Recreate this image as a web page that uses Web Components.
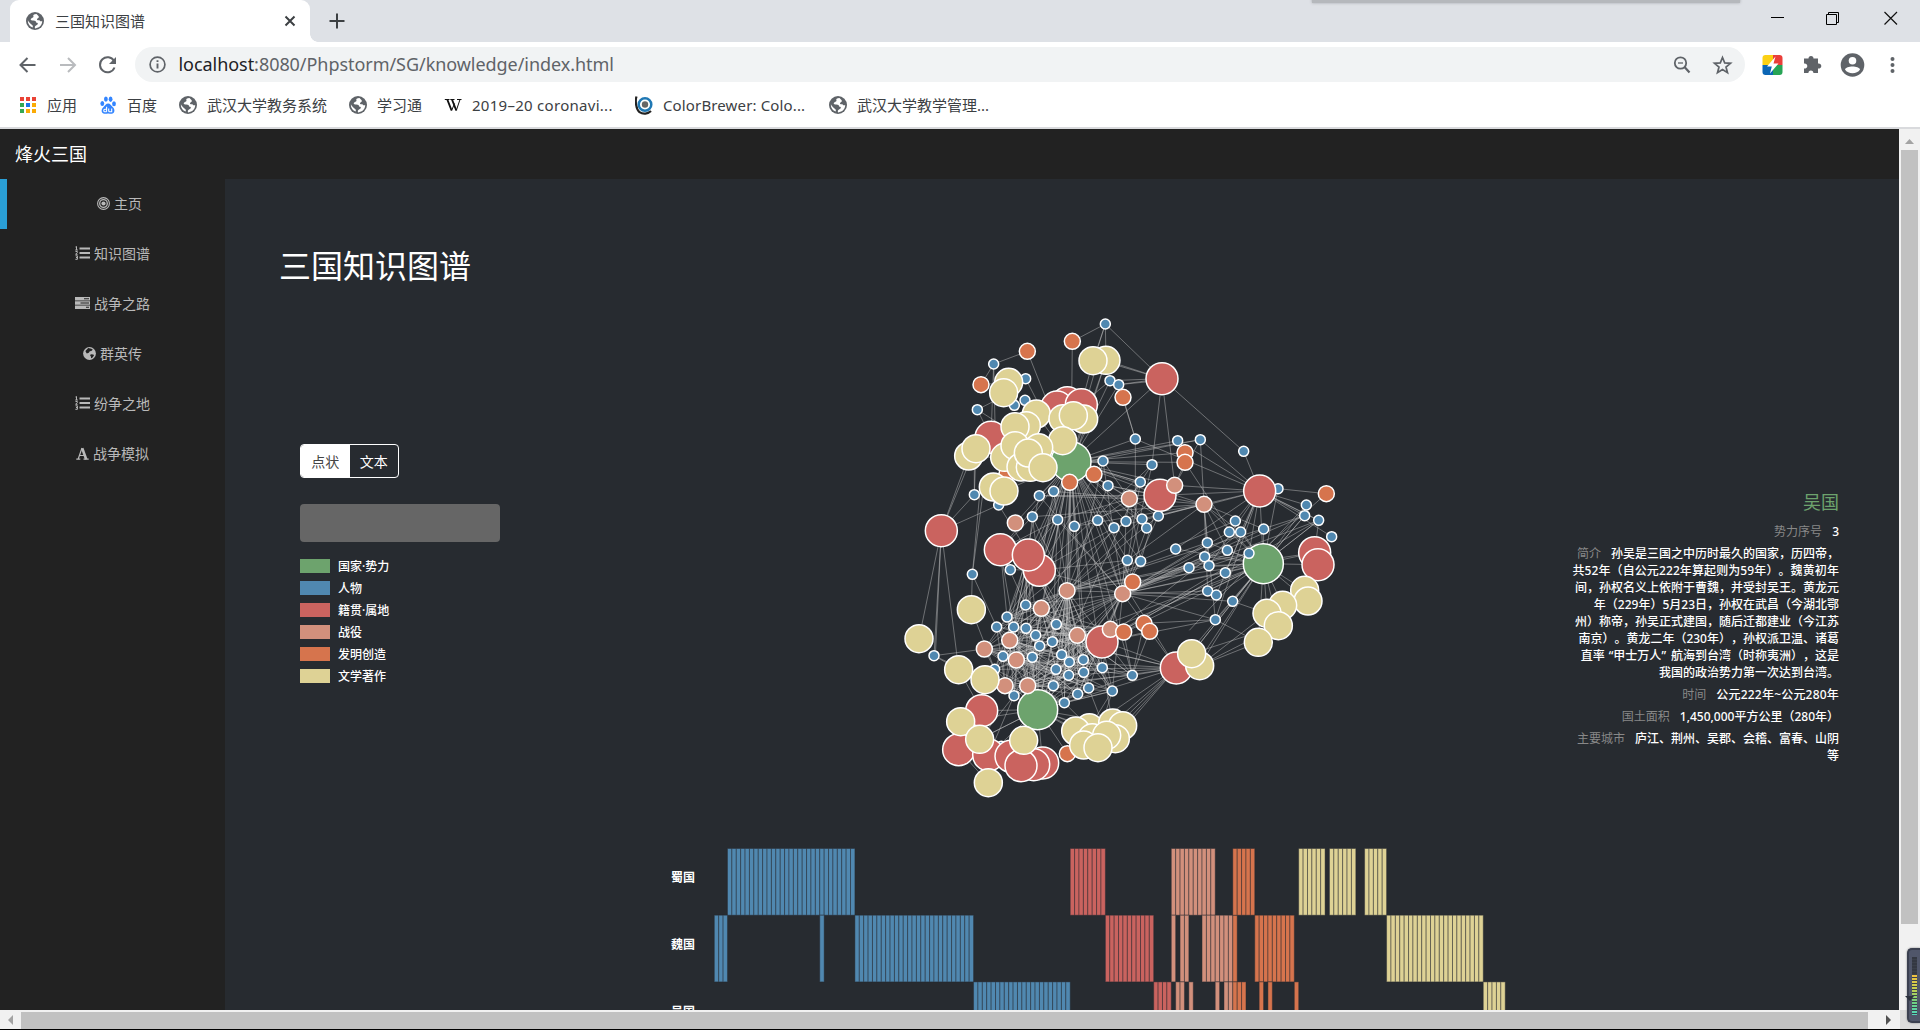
<!DOCTYPE html>
<html lang="zh-CN">
<head>
<meta charset="utf-8">
<title>三国知识图谱</title>
<style>
html,body{margin:0;height:100%;overflow:hidden;background:#272b30}
body{font-family:"Noto Sans","Noto Sans CJK SC",sans-serif;text-spacing-trim:space-all}
</style>
</head>
<body>
<app-window></app-window>
<script>
const ICONS = {
  globe: '<svg width="18" height="18" viewBox="0 0 18 18"><circle cx="9" cy="9" r="9" fill="#5f6368"/><path d="M10.5 1.9C7.8 2.2 6.8 3 7.4 4.2 8.1 5.4 6.2 5.4 5 6.8c-.8 1 .2 1.8 1.6 1.7 2.4-.2 3.6.5 3.4 2 1.6.1 2.3.8 1.5 2-.8 1-2.3.9-2.6 2.3-.2 1 .1 1.5.3 1.6 4.2-.3 7-3.2 7-7.3-1.2.6-2.2.1-2.5-.7-.9-.2-1.9.2-2.5-.5-.8-.9.5-1.6 1.3-2.2.7-.6.3-1.3-.3-2zM1.9 8.300c-.3 3.600 1.900 6.300 4.800 7.200.6-1.700-.3-2.300-1.200-3-1.100-.9-2.600-2-3.600-4.200z" fill="#fff"/></svg>',
  apps: '<svg width="18" height="18" viewBox="0 0 18 18"><g fill="#ea4335"><path d="M1 1h4v4H1zM7 1h4v4H7zM13 1h4v4h-4z"/></g><path d="M1 7h4v4H1zM1 13h4v4H1z" fill="#34a853"/><path d="M7 7h4v4H7z" fill="#1a73e8"/><path d="M13 7h4v4h-4zM7 13h4v4H7zM13 13h4v4h-4z" fill="#fbab05"/></svg>',
  baidu: '<svg width="18" height="18" viewBox="0 0 18 18" fill="#3385ff"><ellipse cx="3.300" cy="7.500" rx="1.900" ry="2.500"/><ellipse cx="6.900" cy="3.100" rx="1.900" ry="2.700"/><ellipse cx="11.600" cy="3.300" rx="1.900" ry="2.700"/><ellipse cx="15" cy="7.700" rx="1.900" ry="2.500"/><path d="M9.200 7.500c2 0 2.800 1.900 4.500 3.500 2.900 2.700 1.900 6.700-1 6.800-1.300 0-2.300-.3-3.600-.3s-2.200.4-3.600.3c-3.100-.2-3.900-4-1.200-6.600C6 9.600 7 7.500 9.200 7.500z"/><path d="M7.600 10.800v5M7.600 13.300H5.800a1 1 0 0 0-1 1v.5a1 1 0 0 0 1 1h1.800M9.700 12.600v2.200a1 1 0 0 0 1 1h2v-3.200" fill="none" stroke="#fff" stroke-width="1.100"/></svg>',
  wiki: '<svg width="18" height="18" viewBox="0 0 18 18" fill="none" stroke="#111"><path d="M3.300 3.500l4.300 11M8 3.500l4.300 11" stroke-width="1.900"/><path d="M7.600 14.500l3-7M12.300 14.500L16 3.500M.8 3.500H5.500M6.300 3.500h4.200M13 3.500h4.500" stroke-width="1"/></svg>',
  brewer: '<svg width="18" height="20" viewBox="1 0 18 20" fill="none"><path d="M2.500 1.500C1 6 2 14 5.500 17.200c3.500 2.300 8.300 1.900 11.500-1.200" stroke="#222" stroke-width="2.200"/><circle cx="11" cy="9.500" r="6.300" fill="#fff" stroke="#1f78b4" stroke-width="2.500"/><circle cx="11" cy="9.500" r="3.200" fill="#666"/></svg>',
  target: '<svg width="13" height="13" viewBox="0 0 13 13" fill="none" stroke="#b9b9b9"><circle cx="6.500" cy="6.500" r="5.900" stroke-width="1.100"/><circle cx="6.500" cy="6.500" r="3.800" stroke-width="1.300"/><circle cx="6.500" cy="6.500" r="2.100" fill="#b9b9b9" stroke="none"/></svg>',
  list: '<svg width="15" height="14" viewBox="0 0 15 14" fill="none" stroke="#b9b9b9"><path d="M4.500 2.500H15M4.500 7H15M4.500 11.500H15" stroke-width="2.100"/><path d="M.5 1l1-.5v3.500M.3 4h2.500M.5 5.500h1.800v1L.6 8.300h2M.5 9.800h1.900v3.500H.4M1 11.500h1.200" stroke-width="1"/></svg>',
  server: '<svg width="15" height="12" viewBox="0 0 15 12"><path d="M0 0h15v3.400H0zM0 4.300h15v3.400H0zM0 8.600h15V12H0z" fill="#b9b9b9"/><path d="M9 1.700h5M5.500 6h8.500M11 10.300h3" stroke="#222" stroke-width="1.100"/></svg>',
  earth: '<svg width="13" height="13" viewBox="0 0 13 13"><circle cx="6.500" cy="6.500" r="6.400" fill="#b9b9b9"/><path d="M5.200 1l3.200.7 1.400 1-1.500 1.400-1.500.2-1 1.400-2 .8-.8-1.300-.6-1.300zM7.800 7.200l2.600.4.6 1-1.700 2.200-1.200.500-.2-1.900-.8-.9z" fill="#222"/></svg>',
  letter: '<svg width="13" height="13" viewBox="0 0 13 13" fill="none" stroke="#b9b9b9"><path d="M6.200 1.200l4 11" stroke-width="2.600"/><path d="M6 1L2.200 12M3.500 8.500h5M.3 12.200h4M7.500 12.200h5.200" stroke-width="1.200"/></svg>'
};
const define = (name, html, after) => {
  const tpl = document.createElement('template');
  tpl.innerHTML = html;
  customElements.define(name, class extends HTMLElement {
    constructor() {
      super();
      this.attachShadow({mode: 'open'}).append(tpl.content.cloneNode(true));
    }
    connectedCallback() { if (after) after(this, this.shadowRoot); }
  });
};
const setIcon = (icon, name) => { icon.shadowRoot.querySelector('span').innerHTML = ICONS[name] || ''; };

define('ui-icon', '<style>:host{display:inline-flex;flex:none}svg{display:block}</style><span></span>',
  h => { if (h.hasAttribute('name')) setIcon(h, h.getAttribute('name')); });

define('tab-strip', `<style>
:host{display:flex;height:42px;background:#dee1e6;position:relative;box-sizing:border-box;padding-left:10px;overflow:hidden}
.tab{width:300px;height:42px;background:#fff;border-radius:9px 9px 0 0;display:flex;align-items:center;box-sizing:border-box;padding:0 14px 0 16px;font-size:15px;color:#3c4043}
.tab b{font-weight:400;margin-left:11px;flex:1;position:relative;top:-1px}
.plus{align-self:center;margin-left:11px}
.win{margin-left:auto;display:flex;align-items:center;height:36px;padding-right:22px}
.shade{position:absolute;left:1312px;top:-3px;width:428px;height:6px;background:#b5b8bc;box-shadow:0 0 3px #a5a8ac}
.foot{align-self:flex-end;width:8px;height:8px;background:radial-gradient(circle at 100% 0,transparent 7.500px,#fff 8px)}
</style>
<div class="tab"><ui-icon name="globe"></ui-icon><b>三国知识图谱</b><svg width="12" height="12"><path d="M1.500 1.500l9 9M10.500 1.500l-9 9" stroke="#3c4043" stroke-width="2"/></svg></div><div class="foot"></div>
<svg class="plus" width="16" height="16"><path d="M8 .5v15M.5 8h15" stroke="#3c4043" stroke-width="2"/></svg>
<div class="win"><svg width="130" height="18"><path d="M3 8.500h13" stroke="#000"/><path d="M58.500 5.500h10v10h-10zM60.500 5.500v-2h10v10h-2" fill="none" stroke="#000"/><path d="M116.500 3l12.500 12.500M129 3l-12.500 12.500" stroke="#111" stroke-width="1.200"/></svg></div>
<div class="shade"></div>`);

define('tool-bar', `<style>
:host{display:flex;align-items:center;height:45px;background:#fff;padding-left:17px;box-sizing:border-box}
.nav{width:118px;flex:none}
.url{flex:none;width:1610px;height:35px;border-radius:18px;background:#f1f3f4;display:flex;align-items:center;box-sizing:border-box;padding:0 12px 0 14px}
.url p{margin:0 0 0 12.500px;flex:1;font-size:18px;color:#5f6368;white-space:nowrap;letter-spacing:-.05px;position:relative;top:-1px}
.url i{font-style:normal;color:#202124}
svg{display:block}
</style>
<svg class="nav" width="118" height="24" fill="none" stroke="#5f6368" stroke-width="2"><path d="M18.500 12H4M10.500 5l-7 7 7 7"/><path d="M43 12h14.500M51 5l7 7-7 7" stroke="#b9bbbe"/><path d="M97 8a7.500 7.500 0 1 0 .5 6.500"/><path d="M99 4v7h-7z" fill="#5f6368" stroke="none"/></svg>
<div class="url"><svg width="17" height="17" fill="none" stroke="#5f6368"><circle cx="8.500" cy="8.500" r="7.400" stroke-width="1.700"/><path d="M8.500 7.500v5M8.500 4.300v1.800" stroke-width="1.900"/></svg>
<p><i>localhost</i>:8080/Phpstorm/SG/knowledge/index.html</p>
<svg width="60" height="20" fill="none" stroke="#5f6368"><circle cx="7.500" cy="8" r="5.700" stroke-width="1.800"/><path d="M11.500 12l5 5.500" stroke-width="2.200"/><path d="M5 8h5" stroke-width="1.300"/><path d="M49.500 2.500l2.200 5.400 5.800.4-4.500 3.700 1.500 5.700-5-3.200-5 3.200 1.500-5.700-4.500-3.700 5.800-.4z" stroke-width="1.700"/></svg></div>
<svg width="175" height="26" style="flex:none"><defs><clipPath id="c"><rect x="17.500" y="3" width="20" height="20" rx="3"/></clipPath></defs><g clip-path="url(#c)"><path d="M17 2h11v11H17z" fill="#fbd014"/><path d="M28 2h11v11H28z" fill="#ea3e3a"/><path d="M17 13h11v11H17z" fill="#0b66b5"/><path d="M28 13h11v11H28z" fill="#27a455"/><path d="M30.500 4.500L22 14.500h4.800L25 21.500l8.500-10h-5z" fill="#fff"/></g>
<path d="M59 7.500h4.500a2.500 2.500 0 1 1 5 0H73v5a2.600 2.600 0 1 1 0 5V22h-4.600a2.500 2.500 0 0 0-5 0H59v-4.500a2.600 2.600 0 1 0 0-5z" fill="#5f6368" transform="translate(0 -1)"/>
<circle cx="107.500" cy="13" r="11.800" fill="#5f6368"/><circle cx="107.500" cy="8.800" r="3.800" fill="#fff"/><path d="M100 17.500c1-4 14-4 15 0-3 5-12 5-15 0z" fill="#fff"/>
<g fill="#5f6368"><circle cx="147.500" cy="7" r="2"/><circle cx="147.500" cy="13" r="2"/><circle cx="147.500" cy="19" r="2"/></g></svg>`);

define('book-mark', `<style>:host{display:flex;align-items:center;gap:10px;font-size:15px;color:#3c4043;white-space:nowrap;flex:none}</style><ui-icon></ui-icon><slot></slot>`,
  (h, r) => { h.style.width = h.getAttribute('w') + 'px'; setIcon(r.querySelector('ui-icon'), h.getAttribute('icon')); });

define('bookmark-bar', `<style>:host{display:flex;height:42px;background:#fff;border-bottom:2px solid #d9dadd;box-sizing:border-box;padding:0 0 5px 19px}</style>
<book-mark icon="apps" w="80">应用</book-mark><book-mark icon="baidu" w="80">百度</book-mark><book-mark icon="globe" w="170">武汉大学教务系统</book-mark><book-mark icon="globe" w="95">学习通</book-mark><book-mark icon="wiki" w="191" style="letter-spacing:.28px">2019–20 coronavi...</book-mark><book-mark icon="brewer" w="194" style="letter-spacing:.14px">ColorBrewer: Colo...</book-mark><book-mark icon="globe" w="180">武汉大学教学管理...</book-mark>`);

define('side-item', `<style>:host{display:flex;height:50px;box-sizing:border-box;align-items:center;justify-content:center;gap:4px;font-size:14px;color:#b9b9b9;border-left:7px solid transparent;border-right:7px solid transparent;padding-bottom:2px}
:host([active]){border-left-color:#2a9fd6}</style><ui-icon></ui-icon><span><slot></slot></span>`,
  (h, r) => setIcon(r.querySelector('ui-icon'), h.getAttribute('icon')));

define('side-nav', `<style>:host{display:block;width:225px;flex:none;background:#222}</style>
<side-item icon="target" active style="padding-left:14px">主页</side-item><side-item icon="list">知识图谱</side-item><side-item icon="server">战争之路</side-item><side-item icon="earth">群英传</side-item><side-item icon="list">纷争之地</side-item><side-item icon="letter">战争模拟</side-item>`);

define('graph-controls', `<style>
:host{display:block;width:200px;margin:157px 0 0 75px;flex:none}
.mode{display:flex;width:99px;height:34px;border:1px solid #fff;border-radius:4px;box-sizing:border-box;font-size:14px;color:#fff;overflow:hidden}
.mode span{width:49px;display:flex;align-items:center;justify-content:center;padding-bottom:1px;box-sizing:border-box}
.mode .on{background:#fff;color:#444}
.find{height:38px;border-radius:4px;background:#666;margin:26px 0 17px}
.row{display:flex;gap:8px;height:14px;margin-bottom:8px;align-items:center;font-size:12px;font-weight:500;color:#fff;white-space:nowrap}
.row i{width:30px;height:14px;background:var(--c)}
</style><div class="mode"><span class="on">点状</span><span>文本</span></div><div class="find"></div>
<div class="row" style="--c:#6da36d"><i></i>国家·势力</div><div class="row" style="--c:#5088b0"><i></i>人物</div><div class="row" style="--c:#ca635f"><i></i>籍贯·属地</div><div class="row" style="--c:#d2907c"><i></i>战役</div><div class="row" style="--c:#d6744d"><i></i>发明创造</div><div class="row" style="--c:#ded295"><i></i>文学著作</div>`);

const NODES = [
 ['#6da36d', 20, '512,484 412,1228 1089,790'],
 ['#5088b0', 5, '615,71 280,191 376,235 374,300 342,315 231,328 629,241 655,253 705,416 608,482 623,556 720,545 460,573 417,586 222,583 295,614 396,649 472,658 522,678 592,660 641,682 677,663 725,656 832,421 900,418 1030,453 755,493 1133,565 1218,614 1213,646 1255,660 1294,709 1090,686 1005,662 987,695 1021,695 921,727 774,647 739,683 826,746 981,750 1046,759 913,769 926,796 866,802 975,817 681,780 721,783 922,872 948,884 997,903 945,958 696,1125 216,822 330,808 376,914 320,950 289,980 340,980 377,984 406,1005 418,1037 456,1024 468,972 396,1071 308,1068 101,1066 283,1107 341,1186 484,1063 507,1085 549,1078 467,1107 505,1125 550,1116 606,1102 459,1156 565,1163 532,1181 492,1207 636,1172 303,1338'],
 ['#ca635f', 16, '501,307 470,320 543,313 272,411 785,235 779,585 1078,572 1243,757 1253,793 123,691 300,748 417,810 384,764 605,1025 828,1103 244,1231 175,1348 265,1364 332,1368 427,1388 400,1393 362,1396'],
 ['#d2907c', 8, '687,595 345,668 823,555 911,612 500,871 667,880 423,924 328,1020 252,1046 348,1079 314,1156 382,1156 531,1005 630,987'],
 ['#d6744d', 8, '516,123 381,153 242,253 668,291 581,522 508,546 320,520 854,457 854,486 1278,580 697,845 670,995 731,969 748,993 501,1360'],
 ['#ded295', 14, '617,180 578,181 325,246 310,277 408,341 378,376 344,379 550,356 488,355 519,346 487,421 205,467 227,445 313,471 344,436 362,500 390,501 415,442 384,458 428,502 279,560 311,572 213,928 56,1015 175,1108 254,1138 181,1264 238,1317 370,1320 264,1447 567,1282 637,1268 526,1292 667,1276 576,1312 645,1315 619,1305 550,1334 593,1342 1213,870 1223,902 1147,915 1100,939 1134,976 1074,1026 898,1096 874,1060']
];
const LINKS = `615,71>516,123 615,71>578,181 615,71>590,150 615,71>617,180 615,71>785,235 516,123>514,310 381,153>280,191 381,153>455,340 280,191>242,253 280,191>272,411 280,191>285,411 376,235>440,360 242,253>325,246 231,328>325,280 231,328>272,411 231,328>344,400 374,300>378,376 629,241>785,235 655,253>785,235 655,253>785,240 617,180>785,235 617,185>785,235 629,241>512,484 655,253>512,484 578,181>543,313 590,190>550,330 629,241>543,313 668,291>705,416 668,291>655,253 617,180>512,484 617,180>520,484 785,235>512,484 785,235>755,493 785,235>823,555 785,235>1030,453 1030,453>1078,572 705,416>1078,572 705,416>705,656 705,416>655,253 705,416>512,484 832,421>1078,572 832,421>512,484 900,418>1078,572 900,418>911,612 900,418>512,484 900,418>512,494 900,418>823,555 854,457>512,484 854,486>512,484 854,486>995,700 854,486>823,555 1078,572>779,585 1078,572>823,555 1078,572>911,612 1078,572>911,616 1278,580>1133,565 1278,580>1040,790 1218,614>1078,572 1218,614>1089,790 1213,646>1078,572 1255,660>1078,572 1255,660>1243,757 1255,660>1089,790 1294,709>1078,572 1213,646>1089,790 1218,614>867,990 1133,565>1089,790 1294,709>1243,757 1243,757>1089,790 1253,793>1089,790 1243,757>1089,780
123,691>222,583 123,691>205,467 123,691>215,467 123,691>295,614 123,691>56,1015 123,691>101,1066 123,691>105,1066 123,691>175,1108 101,1066>175,1108 101,1066>252,1046 101,1066>254,1138 216,822>213,928 216,822>289,980 216,822>250,560 216,822>240,560 213,928>283,1107 222,583>227,445 222,583>222,440 295,614>311,572 295,614>417,810 417,810>667,880
828,1103>567,1282 828,1103>637,1268 828,1103>667,1276 828,1103>619,1305 828,1103>645,1315 828,1103>667,880 828,1103>670,850 1089,790>828,1103 1089,790>874,1060 1089,790>898,1096 1089,790>890,1090 898,1096>1100,939 898,1096>1134,976 898,1096>1074,1026 874,1060>1134,976 945,958>1074,1026 945,958>731,969 997,903>1100,939
412,1228>244,1231 412,1228>175,1348 412,1228>181,1264 412,1228>238,1317 412,1228>265,1364 412,1228>332,1368 412,1228>427,1388 412,1228>501,1360 412,1228>526,1292 412,1228>567,1282 412,1228>576,1312 412,1228>637,1268 412,1228>619,1305 412,1228>254,1138 341,1186>265,1364 341,1186>238,1317 303,1338>175,1348 303,1338>362,1396 265,1364>175,1348 175,1348>264,1447 492,1207>567,1282 636,1172>567,1282 636,1172>590,1320 565,1163>620,1305 606,1102>637,1268 175,1108>244,1231`;

define('force-graph', '<style>:host{display:block;width:460px;height:510px;flex:none}svg{display:block}</style><svg width="460" height="510" viewBox="-1 -1 1380 1530"><g id="l" stroke="#ccc" stroke-opacity=".43" stroke-width="3" fill="none"></g><g id="n" stroke="#fff" stroke-width="4.500"></g></svg>',
  (h, r) => {
    const parse = s => s.split(' ').map(p => p.split(',').map(Number));
    const segs = LINKS.trim().split(/\s+/).map(s => 'M' + s.replace('>', 'L'));
    const add = (a, b) => segs.push(`M${a}L${b}`);
    const [gs, blues] = [parse(NODES[0][2]), parse(NODES[1][2])];
    const low = blues.filter(p => p[1] > 890 && p[0] > 250 && p[0] < 700 && p[1] < 1250);
    const mid = blues.filter(p => p[1] > 480 && p[1] < 830 && p[0] > 380 && p[0] < 800);
    const east = blues.filter(p => p[0] > 800 && p[1] > 640 && p[0] < 1260);
    const hubs = parse(NODES[3][2]);
    const lowHubs = hubs.filter(p => p[1] > 900);
    // faction members tie to their ruler
    mid.forEach(p => add(gs[0], p));
    east.forEach(p => add(gs[2], p));
    low.forEach(p => add(gs[1], p));
    low.forEach((p, i) => {
      add(p, hubs[4]);
      if (i % 2) add(p, hubs[5]);
      lowHubs.forEach((q, j) => { if ((i * 3 + j * 2) % 5 < 3) add(p, q); });
      if (i % 2 === 0) add(p, gs[0]);
      if (i % 3 === 1) add(p, [384, 764]);
      if (i % 3 === 0) add(p, [828, 1103]);
      if (i % 3 === 2) add(p, mid[(i * 5) % mid.length]);
      if (i % 4 === 1) add(p, [605, 1025]);
      if (i % 3 === 1) add(p, low[(i * 7 + 5) % low.length]);
    });
    mid.forEach((p, i) => {
      add(p, hubs[i % 2 ? 4 : 5]);
      if (i % 3 === 0) add(p, [417, 810]);
      if (i % 2) add(p, hubs[3]);
      if (i % 2 === 0) add(p, hubs[0]);
      if (i % 3 === 1) add(p, [779, 585]);
    });
    east.forEach((p, i) => {
      if (i % 4 < 3) add(p, hubs[5]);
      if (i % 3 === 0) add(p, hubs[4]);
      if (i % 2) add(p, [1078, 572]);
      if (i % 3 === 2) add(p, hubs[3]);
      if (i % 4 === 1) add(p, [605, 1025]);
    });
    [[687,595],[345,668],[823,555],[911,612],[500,871],[667,880],[630,987],[697,845],[779,585],[720,545]].forEach(p => add(gs[0], p));
    [[667,880],[605,1025],[500,871],[630,987],[531,1005],[911,612],[1078,572],[1213,870],[1147,915],[1100,939],[1134,976],[1074,1026],[1223,902],[874,1060]].forEach(p => add(gs[2], p));
    [[731,969],[748,993],[670,995]].forEach(p => { add(p, [605,1025]); add(p, [696,1125]); });
    parse(NODES[5][2]).slice(4, 22).forEach(p => add(gs[0], p));
    [[300,748],[384,764],[417,810]].forEach(p => { [[512,484],[396,649],[472,658],[376,914],[320,950],[340,980],[330,808]].forEach(q => add(p, q)); });
    r.querySelector('#l').innerHTML = segs.map(s => `<path d="${s}"/>`).join('');
    r.querySelector('#n').innerHTML = NODES.map(([c, rad, s]) => `<g fill="${c}">` + parse(s).map(p => `<circle cx="${p[0]}" cy="${p[1]}" r="${rad * 3}"/>`).join('') + '</g>').join('');
  });

define('info-panel', `<style>
:host{display:block;margin:202px 60px 0 auto;text-align:right;font-size:12px;line-height:17px;color:#fff;white-space:nowrap}
h4{margin:0 0 8px;font-size:18px;line-height:26px;font-weight:400;color:#6da36d}
p{margin:0 0 5px;font-weight:500}
i{font-style:normal;font-weight:400;color:#888;margin-right:10px}
.q{margin-left:4px}.e{margin-right:5px}
.l{letter-spacing:.1px}
</style><h4>吴国</h4>
<p><i>势力序号</i>3</p>
<p><i>简介</i>孙吴是三国之中历时最久的国家，历四帝，<br><span class="l">共52年（自公元222年算起则为59年）。魏黄初年</span><br>间，孙权名义上依附于曹魏，并受封吴王。黄龙元<br>年（229年）5月23日，孙权在武昌（今湖北鄂<br>州）称帝，孙吴正式建国，随后迁都建业（今江苏<br>南京）。黄龙二年（230年），孙权派卫温、诸葛<br>直率<span class="q">“</span>甲士万人<span class="e">”</span>航海到台湾（时称夷洲），这是<br>我国的政治势力第一次达到台湾。</p>
<p><i>时间</i><span style="letter-spacing:.2px">公元222年~公元280年</span></p>
<p><i>国土面积</i>1,450,000平方公里（280年）</p>
<p><i>主要城市</i>庐江、荆州、吴郡、会稽、富春、山阴<br>等</p>`);

define('faction-bars', '<style>:host{display:block;margin:10px 0 0 425px;height:190px}text{font-size:12px;font-weight:700;fill:#fff}svg{display:block}</style><svg width="880" height="250"><g stroke="#272b30" stroke-opacity=".45"></g><text x="21" y="42">蜀国</text><text x="21" y="109">魏国</text><text x="21" y="176">吴国</text></svg>',
  (h, r) => {
    const B = '#5088b0', R = '#ca635f', S = '#d2907c', O = '#d6744d', Y = '#ded295';
    const runs = [
      [0,3,31,B],[1,0,2,B],[1,24,24,B],[1,32,58,B],[2,59,80,B],
      [0,81,88,R],[1,89,99,R],[2,100,103,R],
      [0,104,113,S],[1,104,104,S],[1,106,107,S],[1,111,117,S],[2,105,106,S],[2,108,108,S],[2,114,114,S],[2,116,117,S],
      [1,118,118,O],[2,118,120,O],[0,118,122,O],[1,123,131,O],[2,124,124,O],[2,126,126,O],[2,132,132,O],
      [0,133,138,Y],[0,140,145,Y],[0,148,152,Y],[1,153,174,Y],[2,175,179,Y]];
    const w = 4.394;
    r.querySelector('g').innerHTML = runs.map(([row, a, b, c]) => {
      let s = '';
      for (let i = a; i <= b; i++) s += `<rect x="${(64.3 + i * w).toFixed(2)}" y="${8.5 + row * 66.7}" width="${w}" height="66.700" fill="${c}"/>`;
      return s;
    }).join('');
  });

define('level-meter', `<style>:host{display:block;position:absolute;right:0;bottom:7px;width:13px;height:75px;box-sizing:border-box;background:#50566a;border:2px solid #3b4050;border-right:0;border-radius:5px 0 0 5px;box-shadow:0 0 2px #777}
div{margin:7px 0 0 3px;width:5px;height:58px;background:repeating-linear-gradient(transparent 0 2px,#3b404a 2px 3px),linear-gradient(#343842 0 17px,#f0c040 18px,#c5d050 32px,#70d080 45px,#52d8bc 58px)}
svg{position:absolute;left:-4px;top:46px}</style><div></div><svg width="9" height="5"><path d="M0 0h9L5 5z" fill="#2b303c"/></svg>`);

define('app-window', `<style>
:host{display:flex;flex-direction:column;width:1920px;height:1030px;position:relative;overflow:hidden;background:#272b30}
.view{display:flex;height:881px;flex:none}
.page{width:1899px;height:881px;flex:none;overflow:hidden;display:flex;flex-direction:column;background:#272b30}
.top{height:50px;background:#222;flex:none;color:#fff;font-size:18px;line-height:50px;padding-left:15px;box-sizing:border-box}
.body{display:flex;height:831px;flex:none}
main{flex:1;min-width:0}
h1{margin:66px 0 0 54px;font-size:32px;line-height:42px;font-weight:400;color:#fff}
.row{display:flex;height:543px}
force-graph{margin:13px 0 0 400px}
.vs{width:21px;background:#f1f1f1;display:flex;flex-direction:column;align-items:center;padding-top:10px;box-sizing:border-box}
.vs i{width:17px;height:774px;background:#c1c1c1;margin:6px 0 0 -1px}
.hs{height:19px;background:#f1f1f1;display:flex;align-items:center;flex:none}
.hs i{width:1847px;height:17px;background:#c1c1c1;margin:2px 18px 0 5px}
.hs b{width:20px;height:19px;background:#dcdcdc;margin-left:auto}
.end{height:1px;background:#000;flex:none}
svg{display:block}
</style>
<tab-strip></tab-strip><tool-bar></tool-bar><bookmark-bar></bookmark-bar>
<div class="view"><div class="page"><div class="top">烽火三国</div><div class="body"><side-nav></side-nav>
<main><h1>三国知识图谱</h1><div class="row"><graph-controls></graph-controls><force-graph></force-graph><info-panel></info-panel></div><faction-bars></faction-bars></main></div></div>
<div class="vs"><svg width="9" height="5"><path d="M4.500 0L9 5H0z" fill="#a3a3a3"/></svg><i></i></div></div>
<div class="hs"><svg width="16" height="10"><path d="M13 0v10L8 5z" fill="#a3a3a3"/></svg><i></i><svg width="6" height="10"><path d="M0 0v10l5-5z" fill="#505050"/></svg><b></b></div><div class="end"></div>
<level-meter></level-meter>`);
</script>
</body>
</html>
